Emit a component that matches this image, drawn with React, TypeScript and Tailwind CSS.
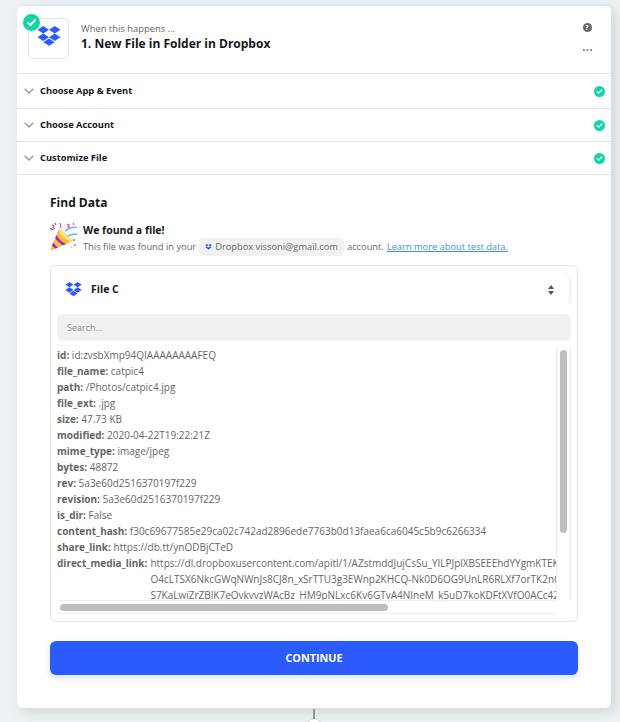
import React from 'react';

const rows = [
  ['id', 'id:zvsbXmp94QIAAAAAAAAFEQ'],
  ['file_name', 'catpic4'],
  ['path', '/Photos/catpic4.jpg'],
  ['file_ext', '.jpg'],
  ['size', '47.73 KB'],
  ['modified', '2020-04-22T19:22:21Z'],
  ['mime_type', 'image/jpeg'],
  ['bytes', '48872'],
  ['rev', '5a3e60d2516370197f229'],
  ['revision', '5a3e60d2516370197f229'],
  ['is_dir', 'False'],
  ['content_hash', 'f30c69677585e29ca02c742ad2896ede7763b0d13faea6ca6045c5b9c6266334'],
  ['share_link', 'https://db.tt/ynODBjCTeD'],
];

const mediaLink = [
  'https://dl.dropboxusercontent.com/apitl/1/AZstmddJujCsSu_YILPJplXBSEEEhdYYgmKTEKxQ2',
  'O4cLTSX6NkcGWqNWnJs8CJ8n_xSrTTU3g3EWnp2KHCQ-Nk0D6OG9UnLR6RLXf7orTK2nGhs81',
  'S7KaLwiZrZBlK7eOvkvvzWAcBz_HM9pNLxc6Kv6GTvA4NIneM_k5uD7koKDFtXVfO0ACc42Yd',
];

const Dropbox = ({ className }: { className: string }) => (
  <svg viewBox="0 0 24 22" className={className} fill="#2b5bff">
    <path d="M6 0 0 3.9l6 3.9 6-3.9zM18 0l-6 3.9 6 3.9 6-3.9zM0 11.7l6 3.9 6-3.9-6-3.9zM18 7.8l-6 3.9 6 3.9 6-3.9zM6 16.9l6 3.9 6-3.9-6-3.9z" />
  </svg>
);

const Check = ({ className }: { className: string }) => (
  <svg viewBox="0 0 16 16" className={className}>
    <circle cx="8" cy="8" r="8" fill="#0fd6a9" />
    <path d="M4.6 8.3 7 10.4l4.4-4.6" fill="none" stroke="#fff" strokeWidth="1.9" strokeLinecap="round" strokeLinejoin="round" />
  </svg>
);

const Party = () => (
  <svg viewBox="0 0 28 28" className="w-[28px] h-[28px] shrink-0">
    <path d="M9 6 23 18 0 28z" fill="#f2bf2f" />
    <path d="M9 6c4 1 11 7 14 12-1 1.500-4 .5-7-2-4-3-8-7-7-10z" fill="#fbe08a" />
    <path d="M6.500 12c2 4 5 7 9.500 9l-3 1.300C10 20.500 7 18 5.200 15zM3.200 19.500c1.500 2.500 3 3.800 5 4.800l-2.700 1.200c-1.500-.8-3-2.200-3.500-3.500z" fill="#a020d8" />
    <path d="M15 8c3-3 7-4 12-4" fill="none" stroke="#3f9be8" strokeWidth="1.200" />
    <path d="M18 13c3-2 6-2 9-2" fill="none" stroke="#5fb4f2" strokeWidth="1.600" />
    <path d="M2 2l2 1-1 2 2 1M10 0l1 5M17 1l2 1-1 2 2 0M23 0l1 2" fill="none" stroke="#e8457f" strokeWidth="1.200" />
    <path d="M0 5l3 2M5 0l1 2" fill="none" stroke="#3a6fe0" strokeWidth="1.200" />
    <circle cx="24" cy="17" r="1" fill="#e8457f" />
    <circle cx="25" cy="22" r="1" fill="#3f9be8" />
    <circle cx="21" cy="24" r=".8" fill="#f2bf2f" />
  </svg>
);

const Row = ({ label, height }: { label: string; height: string }) => (
  <div className={`${height} flex items-center border-b border-[#dfe3e6] pl-[7px] pr-[6px]`}>
    <svg viewBox="0 0 10 6" className="w-[10px] h-[6px] mr-[6px]" fill="none" stroke="#8f979c" strokeWidth="1.300">
      <path d="M.7.7 5 5 9.300.7" />
    </svg>
    <span className="flex-1 text-[9.300px] font-bold text-[#14171a]">{label}</span>
    <Check className="w-[11px] h-[11px]" />
  </div>
);

export default function App() {
  return (
    <div className="relative w-[620px] h-[722px] overflow-hidden bg-[#eef2f4] font-['Open_Sans',sans-serif]">
      <div className="relative ml-[17px] mt-[5px] w-[594px] h-[703px] bg-white rounded-[6px] border-t border-[#dfe3e6] shadow-[4px_4px_12px_rgba(120,135,145,0.28)]">
        {/* Header */}
        <div className="h-[68px] flex items-start pl-[11px] pr-[20px] pt-[12px] border-b border-[#dfe3e6]">
          <div className="relative w-[41px] h-[41px] rounded-[5px] border border-[#dfe3e6] flex items-center justify-center">
            <Dropbox className="w-[24px] h-[21px] mt-[-5px]" />
            <Check className="absolute left-[-6px] top-[-5px] w-[17px] h-[17px]" />
          </div>
          <div className="ml-[12px] flex-1 pt-[4px]">
            <div className="text-[9.400px] leading-[14px] text-[#666]">When this happens ...</div>
            <div className="mt-[-1px] text-[12px] leading-[17px] font-bold text-[#14171a]">1. New File in Folder in Dropbox</div>
          </div>
          <div className="flex flex-col items-center w-[10px] mt-[5px] mr-[-1px]">
            <div className="w-[9px] h-[9px] rounded-full bg-[#666] text-white text-[7px] leading-[9px] font-bold text-center">?</div>
            <svg viewBox="0 0 10 2" className="w-[9px] h-[2px] mt-[17px]" fill="#666">
              <circle cx="1" cy="1" r="1" />
              <circle cx="5" cy="1" r="1" />
              <circle cx="9" cy="1" r="1" />
            </svg>
          </div>
        </div>

        <Row label="Choose App & Event" height="h-[35px]" />
        <Row label="Choose Account" height="h-[33px]" />
        <Row label="Customize File" height="h-[33px]" />

        <div className="px-[33px] pt-[20px]">
          <h2 className="text-[12px] leading-[16px] font-bold text-[#14171a]">Find Data</h2>

          <div className="flex mt-[12px] h-[30px]">
            <Party />
            <div className="ml-[5px]">
              <div className="text-[10.500px] leading-[15px] font-bold text-[#14171a]">We found a file!</div>
              <div className="flex items-center text-[9.300px] leading-[18px] text-[#666] whitespace-nowrap">
                This file was found in your
                <span className="inline-flex items-center h-[18px] rounded-[4px] bg-[#f1f1f1] px-[6px] mx-[3px]">
                  <Dropbox className="w-[7px] h-[6px] mr-[3px]" />
                  Dropbox vissoni@gmail.com
                </span>
                account.
                <a className="ml-[3px] text-[#3d8ff0] underline">Learn more about test data.</a>
              </div>
            </div>
          </div>

          {/* Sample box */}
          <div className="mt-[12px] h-[357px] rounded-[6px] border border-[#e3e3e3] p-[6px]">
            <div className="h-[35px] rounded-[8px] border-r border-[#ececec] flex items-center pl-[8px] pr-[16px]">
              <Dropbox className="w-[17px] h-[15px]" />
              <span className="ml-[9px] mt-[1px] flex-1 text-[10.500px] font-bold text-[#14171a]">File C</span>
              <svg viewBox="0 0 6 10" className="w-[6px] h-[10px]" fill="#555">
                <path d="M3 0l3 4H0zM3 10 0 6h6z" />
              </svg>
            </div>
            <div className="mt-[7px] h-[27px] rounded-[6px] bg-[#f1f1f1] flex items-center pl-[10px] text-[9px] text-[#8c8c8c]">
              Search...
            </div>

            <div className="mt-[6px] flex h-[253px] overflow-hidden">
              <div className="flex-1 min-w-0 overflow-hidden text-[10px] leading-[16px] text-[#666] whitespace-nowrap">
                {rows.map(([k, v]) => (
                  <div key={k} className="h-[16px]">
                    <span className="font-bold">{k}:</span> {v}
                  </div>
                ))}
                <div className="flex">
                  <span className="font-bold">direct_media_link:</span>
                  <div className="ml-[3px]">
                    {mediaLink.map((l) => (
                      <div key={l} className="h-[16px]">{l}</div>
                    ))}
                  </div>
                </div>
              </div>
              <div className="w-[15px] shrink-0 border-l border-r border-[#ececec] px-[3px] pt-[3px]">
                <div className="h-[183px] rounded-full bg-[#bebebe]" />
              </div>
            </div>
            <div className="h-[14px] border-y border-[#ececec] w-[499px] pl-[3px] pt-[3px]">
              <div className="h-[7px] w-[328px] rounded-full bg-[#bebebe]" />
            </div>
          </div>

          <button className="mt-[19px] w-full h-[34px] rounded-[6px] bg-[#2b5bff] text-white text-[10.800px] font-bold shadow-[0_3px_6px_rgba(43,91,255,0.18)]">
            CONTINUE
          </button>
        </div>

        {/* Connector to the next step */}
        <div className="absolute left-[296px] top-[703px] w-[2px] h-[11px] bg-[#8f979c]" />
      </div>
      <div className="absolute left-[308px] top-[719px] w-[12px] h-[12px] rounded-full bg-white shadow-[0_0_2px_rgba(120,135,145,0.6)]" />
    </div>
  );
}
